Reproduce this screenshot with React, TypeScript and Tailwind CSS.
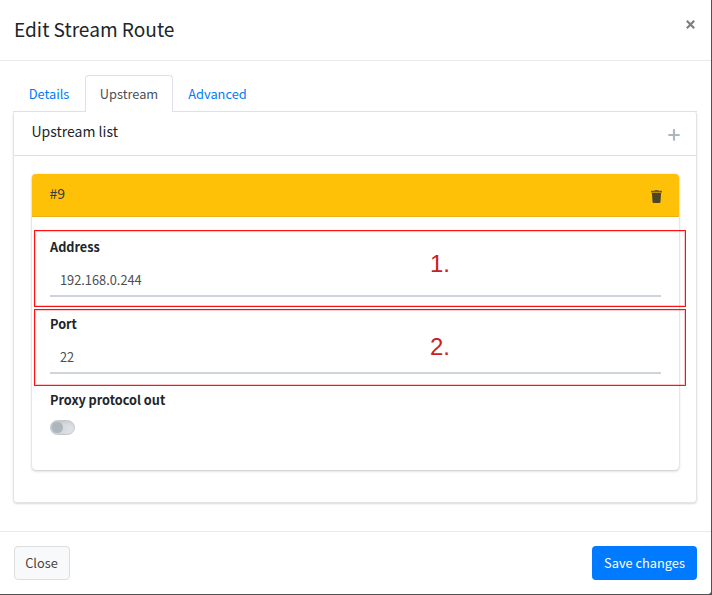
import React from "react";

function Field({ label, value }: { label: string; value: string }) {
  return (
    <div className="h-[77px]">
      <div className="h-[20px] text-[12.7px] leading-[21px] font-bold text-[#212529]">{label}</div>
      <div className="mt-[9px] flex h-[32px] items-start border-b-2 border-[#ced4da] pl-[10px] text-[12.8px] leading-[30px] text-[#495057]">
        {value}
      </div>
    </div>
  );
}

function Callout({ text, className, textTop }: { text: string; className: string; textTop: string }) {
  return (
    <div className={`absolute left-[34px] w-[652px] border border-[#ff1010] shadow-[inset_0_0_0_1px_rgba(255,0,0,0.22)] ${className}`}>
      <span className={`absolute left-[395px] font-['Liberation_Sans',sans-serif] text-[24px] leading-[28px] text-[#c9211e] ${textTop}`}>
        {text}
      </span>
    </div>
  );
}

export default function App() {
  return (
    <div className="relative h-[595px] w-[712px] overflow-hidden bg-[#505050] pr-px pb-px font-['Noto_Sans_CJK_SC',sans-serif] text-[12.8px] text-[#212529]">
      <div className="flex h-[594px] flex-col rounded-br-[3px] bg-white">
        <header className="flex h-[61px] shrink-0 justify-between border-b border-[#e9ecef] pl-[14px] pr-[15px]">
          <h4 className="pt-[14px] text-[19.1px] leading-[30px]">Edit Stream Route</h4>
          <svg className="mt-[20px] mr-[1px]" width="9" height="9" viewBox="0 0 9 9" stroke="#7f7f7f" strokeWidth="2.2">
            <path d="M.8.8 8.2 8.2M8.2.8.8 8.2" />
          </svg>
        </header>

        <main className="h-[470px] pr-[14px] pl-[13px] pt-[14px]">
          <nav className="flex h-[37px] border-b border-[#dee2e6] leading-[37px] text-[#007bff]">
            <a className="w-[72px] text-center">Details</a>
            <a className="h-[37px] w-[88px] rounded-t-[4px] border border-b-0 border-[#dee2e6] bg-white text-center leading-[36px] text-[#495057]">
              Upstream
            </a>
            <a className="w-[89px] text-center">Advanced</a>
          </nav>
          <section className="-mt-px h-[392px] rounded-[4px] border border-t-0 border-[#e3e4e5] shadow-[0_1px_2px_rgba(0,0,0,0.15)]">
            <div className="flex h-[45px] justify-between border-b border-[#dfdfdf] pl-[17.5px] pr-[16px]">
              <h3 className="pt-[8px] text-[14px] leading-[24px]">Upstream list</h3>
              <svg className="mt-[18px]" width="12" height="12" viewBox="0 0 12 12" stroke="#adb5bd" strokeWidth="2.2" strokeLinecap="round">
                <path d="M6 1.2v9.6M1.2 6h9.6" />
              </svg>
            </div>
            <div className="mr-[17px] ml-[18px] mt-[18px] h-[296px] rounded-[4px] shadow-[0_0_1px_rgba(0,0,0,0.2),0_1px_3px_rgba(0,0,0,0.22)]">
              <div className="flex h-[43px] justify-between rounded-t-[4px] border-b border-[#e7b112] bg-[#ffc107] pl-[17.5px] pr-[17.5px]">
                <h3 className="pt-[7px] text-[14px] leading-[24px] text-[#343a40]">#9</h3>
                <svg className="mt-[16px]" width="11" height="13" viewBox="0 0 11 13" fill="#4d4529">
                  <path opacity=".8" d="M0 .8h3.3L3.8 0h3.4l.5.8H11v1.6H0z" />
                  <path d="M.9 2.9h9.2l-.6 8.9q-.1 1.2-1.3 1.2H2.8q-1.2 0-1.3-1.2z" />
                </svg>
              </div>
              <div className="px-[18px] pt-[19px]">
                <Field label="Address" value="192.168.0.244" />
                <Field label="Port" value="22" />
                <div className="-mt-px h-[20px] text-[12.7px] leading-[22px] font-bold">Proxy protocol out</div>
                <div className="mt-[11px] flex h-[15px] w-[25px] items-center rounded-full border border-[#c3c8cd] bg-linear-to-r from-[#c9ced3] to-[#e2e5e8] pl-px shadow-[inset_0_2px_3px_rgba(0,0,0,0.08)]">
                  <span className="h-[11px] w-[11px] rounded-full bg-[#adb5bd]" />
                </div>
              </div>
            </div>
          </section>
        </main>

        <footer className="flex h-[63px] items-start justify-between border-t border-[#e9ecef] px-[14px] pt-[14px]">
          <button className="h-[34px] w-[56px] rounded-[4px] border border-[#ddd] bg-[#f8f9fa] pr-px text-[#444]">Close</button>
          <button className="h-[34px] w-[105px] rounded-[4px] bg-[#007bff] text-white">Save changes</button>
        </footer>
      </div>
      <Callout text="1." className="top-[230px] h-[77px]" textTop="top-[19px]" />
      <Callout text="2." className="top-[309px] h-[77px]" textTop="top-[23px]" />
    </div>
  );
}
